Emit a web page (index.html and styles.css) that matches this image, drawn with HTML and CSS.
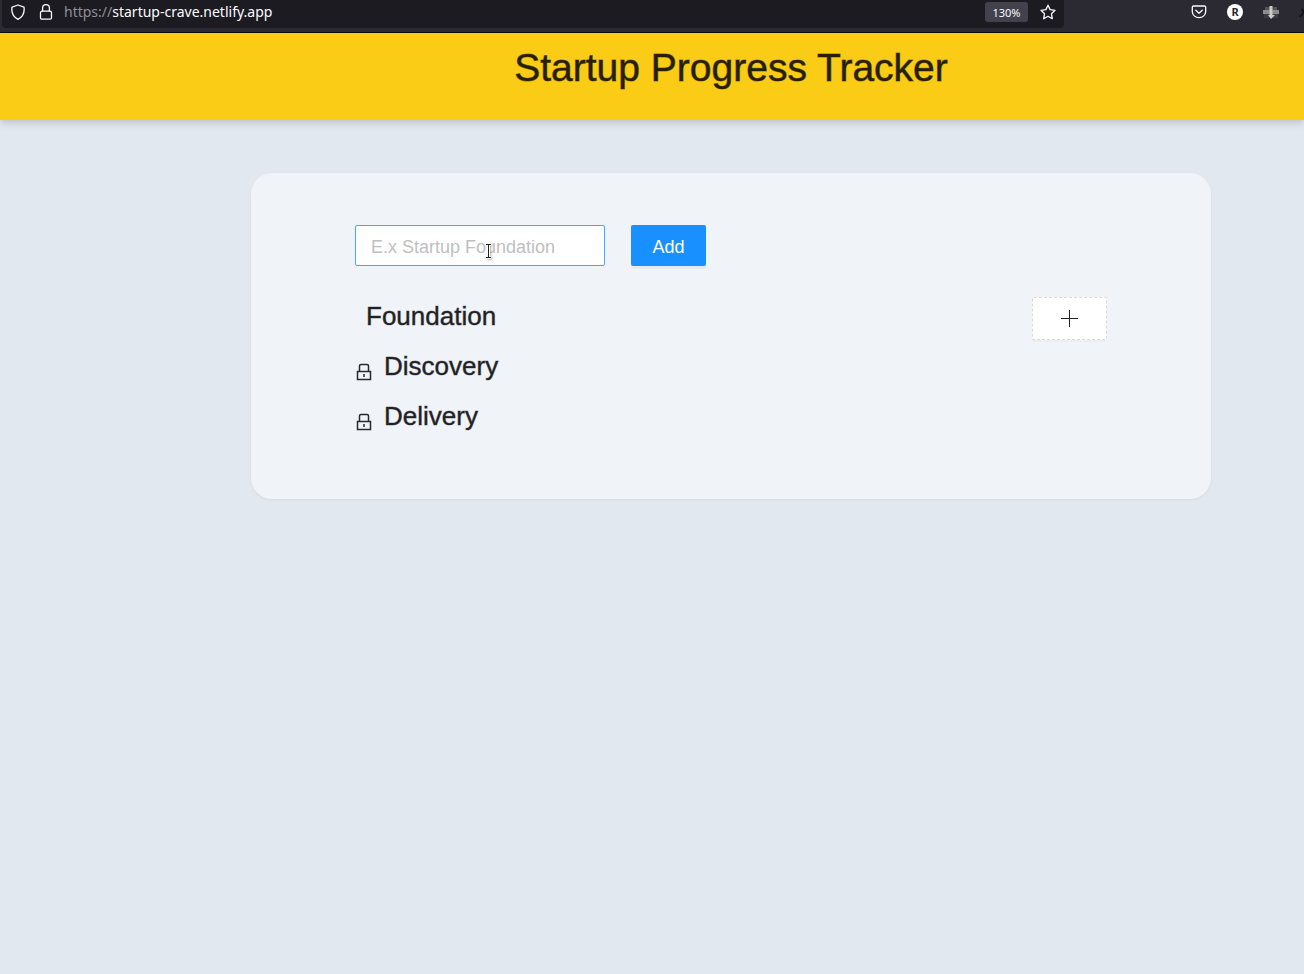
FILE: index.html
```
<!DOCTYPE html>
<html lang="en">
<head>
<meta charset="utf-8">
<meta name="viewport" content="width=device-width, initial-scale=1">
<title>Startup Progress Tracker</title>
<link rel="stylesheet" href="styles.css">
</head>
<body>
<div class="toolbar">
  <div class="address">
    <svg class="icon" viewBox="0 0 16 16" aria-hidden="true"><path d="M8 1 14 3.200C14.700 8.200 12.500 13 8 15.300 3.500 13 1.300 8.200 2 3.200Z"/></svg>
    <svg class="icon lock" viewBox="0 0 16 16" aria-hidden="true"><rect x="2.500" y="7.200" width="11" height="8" rx="1.500"/><path d="M4.600 7V4a3.400 3.400 0 0 1 6.800 0v3"/></svg>
    <span class="url"><span class="scheme">https://</span>startup-crave.netlify.app</span>
    <button class="zoom" type="button">130%</button>
    <button class="tool" type="button" aria-label="Bookmark"><svg class="icon" viewBox="0 0 16 16"><path d="m8 1.200 2.100 4.400 4.900.7-3.500 3.500.8 4.900L8 12.300l-4.300 2.400.8-4.900L1 6.300l4.900-.7Z"/></svg></button>
  </div>
  <div class="extensions">
    <button class="tool" type="button" aria-label="Pocket"><svg class="icon" viewBox="0 0 16 16"><path d="M2.500 2h11a1.200 1.200 0 0 1 1.200 1.200V7.500a6.700 6.200 0 0 1-13.400 0V3.200A1.200 1.200 0 0 1 2.500 2Z"/><path d="m4.800 6.300 3.200 3 3.200-3"/></svg></button>
    <button class="tool account" type="button">R</button>
    <button class="tool" type="button" aria-label="Extension"><svg class="extension-icon" viewBox="0 0 16 16"><path fill="#555" d="M2 3h12v11H2Z"/><path fill="#3c3c40" d="M1 10h14v4H1Z"/><path fill="#8c8c8c" d="M0 6h16v4H0Z"/><path fill="#ccc" d="M6.500 2h3v9H12l-4 4-3-4h1.500Z"/></svg></button>
    <svg class="clipped-icon" viewBox="0 0 6 16" aria-hidden="true"><path d="m1 14 5-6M3 4l3 4"/></svg>
  </div>
</div>
<header class="banner"><h1>Startup Progress Tracker</h1></header>
<main class="page">
  <section class="card">
    <form class="add-form">
      <div class="field">
        <input type="text" aria-label="Phase name" placeholder="E.x Startup Foundation">
        <svg class="pointer" viewBox="0 0 8 16" aria-hidden="true"><path class="pointer-edge" d="M2 1.500h5M4.500 1.500v13M2 14.500h5"/><path d="M2 1.500h5M4.500 1.500v13M2 14.500h5"/></svg>
      </div>
      <button class="add" type="button">Add</button>
    </form>
    <div class="phase">
      <h2>Foundation</h2>
      <button class="plus" type="button" aria-label="Add step"><svg viewBox="0 0 17 17"><path d="M8.500 0v17M0 8.500h17"/></svg></button>
    </div>
    <div class="phase locked">
      <svg class="phase-lock" viewBox="0 0 16 18" aria-hidden="true"><path d="M1.500 8.500h13v8h-13ZM3.500 8V3q0-1.500 1.500-1.500h6q1.500 0 1.500 1.500v5M8 11v3"/></svg>
      <h2>Discovery</h2>
    </div>
    <div class="phase locked">
      <svg class="phase-lock" viewBox="0 0 16 18" aria-hidden="true"><path d="M1.500 8.500h13v8h-13ZM3.500 8V3q0-1.500 1.500-1.500h6q1.500 0 1.500 1.500v5M8 11v3"/></svg>
      <h2>Delivery</h2>
    </div>
  </section>
</main>
</body>
</html>
```
FILE: styles.css
```
* { box-sizing: border-box; }
body {
  margin: 0;
  min-height: 100vh;
  background: #e1e8ef;
  color: #212124;
  font-family: "Liberation Sans", Arial, sans-serif;
  overflow-x: hidden;
}
button, input { font-family: inherit; margin: 0; }
h1, h2 { margin: 0; font-weight: 400; }

.toolbar {
  display: flex;
  height: 33px;
  padding-left: 2px;
  background: #2b2a33;
  border-bottom: 1px solid #0c0c0d;
  font-family: "Noto Sans", sans-serif;
}
.address {
  flex: 1;
  display: flex;
  align-items: center;
  height: 28px;
  padding: 0 8px 4px;
  background: #1c1b22;
  border-radius: 0 0 4px 4px;
}
.icon {
  display: block;
  width: 16px;
  height: 16px;
  fill: none;
  stroke: #fbfbfe;
  stroke-width: 1.300;
  stroke-linejoin: round;
  stroke-linecap: round;
}
.lock { margin-left: 12px; }
.url {
  flex: 1;
  margin-left: 10px;
  color: #fbfbfe;
  font-size: 14px;
  line-height: 20px;
}
.scheme { color: #8f8f96; }
.zoom {
  width: 43px;
  height: 20px;
  padding: 0;
  border: 0;
  border-radius: 3px;
  background: #42414d;
  color: #fbfbfe;
  font-size: 11px;
}
.tool {
  width: 16px;
  height: 16px;
  padding: 0;
  border: 0;
  background: none;
}
.zoom + .tool { margin-left: 12px; }
.extensions {
  display: flex;
  align-items: center;
  gap: 20px;
  height: 24px;
  padding-left: 127px;
}
.account {
  border-radius: 50%;
  background: #fff;
  color: #2b2a33;
  font-size: 11px;
  font-weight: 700;
  line-height: 16px;
}
.extension-icon { display: block; width: 16px; height: 16px; }
.clipped-icon { width: 5px; height: 16px; fill: none; stroke: #111; stroke-width: 2; }

.banner {
  padding: 11px 0 29px 158px;
  background: #facc15;
  box-shadow: 0 5px 8px -1px rgba(0, 0, 0, 0.1), 0 3px 5px -1px rgba(0, 0, 0, 0.06);
  text-align: center;
}
.banner h1 {
  color: #261f04;
  font-size: 39px;
  line-height: 47px;
  -webkit-text-stroke: 1px rgba(38, 31, 4, 0.5);
}

.page { padding: 53px 93px 53px 251px; }
.card {
  padding: 52px 104px 53px;
  border-radius: 21px;
  background: #f0f4f9;
  box-shadow: 0 1px 3px rgba(0, 0, 0, 0.06);
}
.add-form { display: flex; gap: 26px; margin-bottom: 30px; }
.field { position: relative; width: 250px; }
.field input {
  display: block;
  width: 100%;
  height: 41px;
  padding: 4px 15px 0;
  border: 1px solid #40a9ff;
  border-radius: 2px;
  background: #fff;
  font-size: 18px;
  outline: 0;
}
.field input::placeholder { color: #bfbfbf; opacity: 1; }
.pointer {
  position: absolute;
  top: 18px;
  left: 129px;
  width: 8px;
  height: 16px;
  fill: none;
  stroke: #222;
  stroke-width: 1;
  overflow: visible;
  filter: drop-shadow(1px 1px 1px rgba(0, 0, 0, 0.3));
}
.pointer-edge { stroke: #fff; stroke-width: 3; }
.add {
  width: 75px;
  height: 41px;
  padding: 4px 0 0;
  border: 0;
  border-radius: 2px;
  background: #1890ff;
  box-shadow: 0 3px 0 rgba(0, 0, 0, 0.04);
  color: #fff;
  font-size: 18px;
}
.phase {
  display: flex;
  align-items: flex-start;
  height: 50px;
}
.phase h2 {
  font-size: 26px;
  line-height: 40px;
  padding-left: 11px;
  -webkit-text-stroke: 1px rgba(33, 33, 36, 0.4);
}
.locked h2 { padding-left: 12px; }
.phase-lock {
  width: 16px;
  height: 18px;
  margin: 17px 0 0 1px;
  fill: none;
  stroke: #29292c;
  stroke-width: 1.500;
}
.plus {
  display: grid;
  place-items: center;
  width: 75px;
  height: 43px;
  margin: 1px 0 0 auto;
  padding: 0;
  border: 1px dashed #d9d9d9;
  border-radius: 2px;
  background: #fff;
  box-shadow: 0 2px 0 rgba(0, 0, 0, 0.02);
}
.plus svg { width: 17px; height: 17px; fill: none; stroke: #222; stroke-width: 1; }
```
